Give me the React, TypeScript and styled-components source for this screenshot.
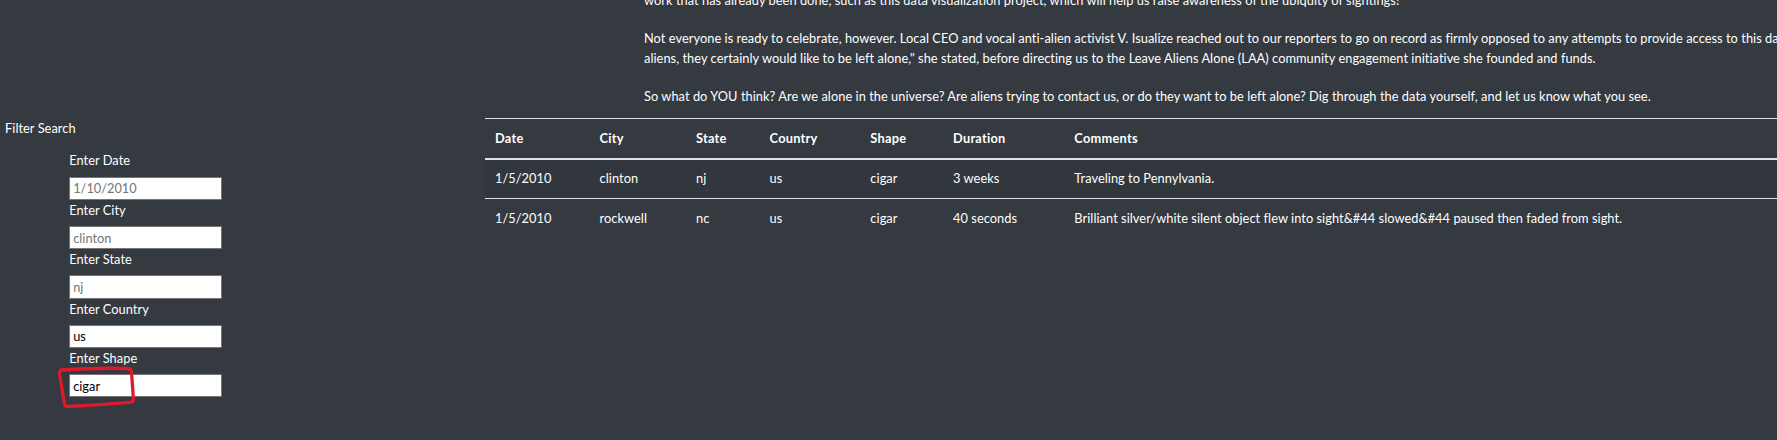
import React from "react";
import styled, { createGlobalStyle } from "styled-components";

const GlobalStyle = createGlobalStyle`
  html, body {
    margin: 0;
    padding: 0;
    background: #343a40;
    overflow: hidden;
  }
  body {
    color: #ffffff;
    font-family: "Lato", "Open Sans", sans-serif;
    font-size: 12.8px;
    line-height: 19.2px;
    letter-spacing: 0.05px;
  }
`;

const Page = styled.div`
  width: 100vw;
  height: 440px;
  overflow: hidden;
`;

const Article = styled.section`
  margin-top: -9px;
  padding-left: 644px;
  margin-bottom: 12px;
`;

const Para = styled.p`
  margin: 0 0 19.2px 0;
  &:last-child {
    margin-bottom: 0;
  }
`;

const Line = styled.span`
  display: block;
  white-space: nowrap;
`;

const Main = styled.div`
  display: flex;
  align-items: flex-start;
`;

const Sidebar = styled.aside`
  flex: 0 0 485.4px;
  padding-left: 5px;
  box-sizing: border-box;
`;

const SidebarTitle = styled.div`
  line-height: 19.2px;
  margin-top: 0.6px;
`;

const FilterList = styled.ul`
  list-style: none;
  margin: 13.4px 0 0 0;
  padding: 0 0 0 64.2px;
`;

const FilterItem = styled.li`
  display: block;
`;

const FilterLabel = styled.label`
  display: block;
  line-height: 19.2px;
  margin-bottom: 6px;
`;

const InputWrap = styled.div`
  position: relative;
  width: 152.4px;
  margin-bottom: 1px;
`;

const FilterInput = styled.input`
  display: block;
  box-sizing: border-box;
  width: 152.4px;
  height: 23.2px;
  margin: 0;
  padding: 0 3px;
  border: 1px solid #767676;
  border-radius: 0;
  background: #ffffff;
  color: #000000;
  font-family: "Lato", "Open Sans", sans-serif;
  font-size: 12.8px;
  outline: none;
  &::placeholder {
    color: #757575;
    opacity: 1;
  }
`;

const Annotation = styled.svg`
  position: absolute;
  left: -17.3px;
  top: -12px;
  width: 90px;
  height: 52px;
  overflow: visible;
  pointer-events: none;
`;

const TableArea = styled.div`
  flex: 0 0 auto;
`;

const Table = styled.table`
  width: 1400px;
  table-layout: fixed;
  border-collapse: collapse;
  color: #ffffff;
`;

const HeadCell = styled.th`
  text-align: left;
  font-weight: 700;
  vertical-align: bottom;
  padding: 9.6px;
  line-height: 19.2px;
  border-top: 1px solid #dee2e6;
  border-bottom: 2px solid #dee2e6;
  white-space: nowrap;
  letter-spacing: 0.25px;
`;

const BodyRow = styled.tr`
  &:nth-of-type(odd) {
    background: rgba(0, 0, 0, 0.05);
  }
`;

const Cell = styled.td`
  padding: 9.6px;
  line-height: 19.2px;
  vertical-align: top;
  border-top: 1px solid #dee2e6;
  white-space: nowrap;
`;

const columns = [
  { key: "date", label: "Date", width: 104.6 },
  { key: "city", label: "City", width: 96.4 },
  { key: "state", label: "State", width: 73.6 },
  { key: "country", label: "Country", width: 100.8 },
  { key: "shape", label: "Shape", width: 82.7 },
  { key: "duration", label: "Duration", width: 121.3 },
  { key: "comments", label: "Comments", width: undefined as number | undefined },
];

type Sighting = {
  date: string;
  city: string;
  state: string;
  country: string;
  shape: string;
  duration: string;
  comments: string;
};

const rows: Sighting[] = [
  {
    date: "1/5/2010",
    city: "clinton",
    state: "nj",
    country: "us",
    shape: "cigar",
    duration: "3 weeks",
    comments: "Traveling to Pennylvania.",
  },
  {
    date: "1/5/2010",
    city: "rockwell",
    state: "nc",
    country: "us",
    shape: "cigar",
    duration: "40 seconds",
    comments:
      "Brilliant silver/white silent object flew into sight&#44 slowed&#44 paused then faded from sight.",
  },
];

const filters = [
  { id: "datetime", label: "Enter Date", placeholder: "1/10/2010", value: "" },
  { id: "city", label: "Enter City", placeholder: "clinton", value: "" },
  { id: "state", label: "Enter State", placeholder: "nj", value: "" },
  { id: "country", label: "Enter Country", placeholder: "us", value: "us" },
  { id: "shape", label: "Enter Shape", placeholder: "triangle", value: "cigar", marked: true },
];

export default function App() {
  return (
    <Page>
      <GlobalStyle />
      <Article>
        <Para>
          <Line>
            work that has already been done, such as this data visualization project, which will help us raise awareness of the ubiquity of sightings!
          </Line>
        </Para>
        <Para>
          <Line>
            Not everyone is ready to celebrate, however. Local CEO and vocal anti-alien activist V. Isualize reached out to our reporters to go on record as firmly opposed to any attempts to provide access to this data. "Even if there are
          </Line>
          <Line>
            aliens, they certainly would like to be left alone," she stated, before directing us to the Leave Aliens Alone (LAA) community engagement initiative she founded and funds.
          </Line>
        </Para>
        <Para>
          <Line>
            So what do YOU think? Are we alone in the universe? Are aliens trying to contact us, or do they want to be left alone? Dig through the data yourself, and let us know what you see.
          </Line>
        </Para>
      </Article>
      <Main>
        <Sidebar>
          <SidebarTitle>Filter Search</SidebarTitle>
          <FilterList>
            {filters.map((f) => (
              <FilterItem key={f.id}>
                <FilterLabel htmlFor={f.id}>{f.label}</FilterLabel>
                <InputWrap>
                  <FilterInput
                    id={f.id}
                    type="text"
                    placeholder={f.placeholder}
                    defaultValue={f.value}
                  />
                  {f.marked && (
                    <Annotation viewBox="0 0 90 52">
                      <path
                        d="M9 8 C30 6.5 58 6 76 6.5 Q79 7 79.5 10 L81.5 38 Q81 40 78 40.3 C58 42 36 43.5 16 44.5 Q13 44.6 12.5 42 L7.5 12 Q7 8.6 10 8.2"
                        fill="none"
                        stroke="#e0192e"
                        strokeWidth="3.3"
                        strokeLinecap="round"
                        strokeLinejoin="round"
                      />
                    </Annotation>
                  )}
                </InputWrap>
              </FilterItem>
            ))}
          </FilterList>
        </Sidebar>
        <TableArea>
          <Table>
            <colgroup>
              {columns.map((c) => (
                <col key={c.key} style={c.width ? { width: c.width } : undefined} />
              ))}
            </colgroup>
            <thead>
              <tr>
                {columns.map((c) => (
                  <HeadCell key={c.key}>{c.label}</HeadCell>
                ))}
              </tr>
            </thead>
            <tbody>
              {rows.map((r, i) => (
                <BodyRow key={i}>
                  <Cell>{r.date}</Cell>
                  <Cell>{r.city}</Cell>
                  <Cell>{r.state}</Cell>
                  <Cell>{r.country}</Cell>
                  <Cell>{r.shape}</Cell>
                  <Cell>{r.duration}</Cell>
                  <Cell>{r.comments}</Cell>
                </BodyRow>
              ))}
            </tbody>
          </Table>
        </TableArea>
      </Main>
    </Page>
  );
}
